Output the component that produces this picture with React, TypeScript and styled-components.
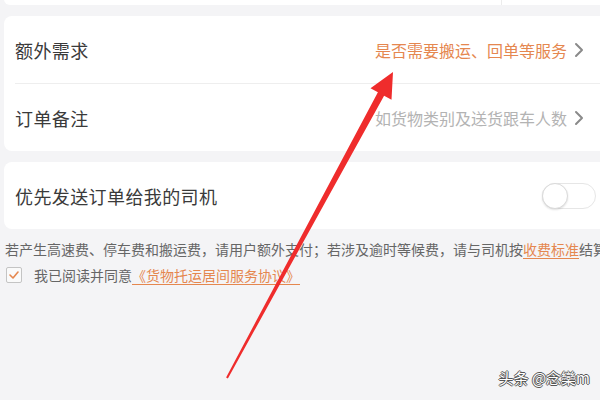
import styled, { createGlobalStyle } from 'styled-components';

const GlobalStyle = createGlobalStyle`
  html, body {
    margin: 0;
    padding: 0;
    background: #f4f4f6;
    font-family: "Noto Sans CJK SC", "Noto Sans", sans-serif;
    overflow: hidden;
  }
`;

const Page = styled.div`
  position: relative;
  width: 600px;
  height: 400px;
  overflow: hidden;
  background: #f4f4f6;
`;

const Content = styled.div`
  display: flex;
  flex-direction: column;
  gap: 11px;
  padding-left: 4px;
  margin-top: -7px;
`;

const Card = styled.div`
  background: #ffffff;
  border-radius: 8px;
  margin-right: -12px;
  padding-left: 11px;
`;

const TopStub = styled(Card)`
  height: 12px;
  display: flex;
  justify-content: flex-end;
  padding-right: 110px;
`;

const StubLine = styled.div`
  width: 1px;
  background: #ececec;
`;

const Row = styled.div<{ $divider?: boolean }>`
  height: 67px;
  display: flex;
  align-items: center;
  justify-content: space-between;
  padding-right: 28px;
  border-bottom: ${(p) => (p.$divider ? '1px solid #eeeeee' : 'none')};
`;

const Label = styled.span`
  font-size: 18px;
  color: #3a3a3a;
  letter-spacing: 0.4px;
`;

const Value = styled.span<{ $accent?: boolean }>`
  display: flex;
  align-items: center;
  gap: 7px;
  font-size: 16px;
  color: ${(p) => (p.$accent ? '#e5874f' : '#b3b3b3')};
`;

const Chevron = () => (
  <svg width="10" height="16" viewBox="0 0 10 16">
    <path d="M2 2 L8 8 L2 14" fill="none" stroke="#8a8a8a" strokeWidth="2" strokeLinecap="round" strokeLinejoin="round" />
  </svg>
);

const Toggle = styled.div`
  width: 54px;
  height: 26px;
  border-radius: 13px;
  border: 1px solid #e6e6e6;
  background: #ffffff;
  display: flex;
  align-items: center;
  box-sizing: border-box;
  margin-right: -12px;
`;

const Knob = styled.div`
  width: 26px;
  height: 26px;
  border-radius: 50%;
  border: 1.5px solid #dadada;
  box-sizing: border-box;
  margin-left: -1px;
  background: #ffffff;
  box-shadow: 0 1px 2px rgba(0, 0, 0, 0.12);
`;

const Notice = styled.div`
  padding: 0 0 0 5px;
  margin-left: -4px;
  margin-top: -1px;
  font-size: 14px;
  color: #666666;
  white-space: nowrap;
  overflow: hidden;
`;

const Link = styled.span`
  color: #e5874f;
  text-decoration: underline;
  text-underline-offset: 3px;
`;

const AgreeRow = styled.div`
  display: flex;
  align-items: center;
  gap: 12px;
  padding-left: 2px;
  margin-top: -5px;
  font-size: 14px;
  color: #666666;
`;

const Check = styled.div`
  width: 16px;
  height: 16px;
  border: 1.5px solid #c4c4c4;
  border-radius: 2px;
  display: flex;
  align-items: center;
  justify-content: center;
  background: #fafafa;
  box-sizing: border-box;
`;

const Watermark = styled.div`
  position: absolute;
  right: 10px;
  bottom: 12px;
  font-size: 15px;
  color: #ffffff;
  text-shadow: -1px 0 #555, 1px 0 #555, 0 -1px #555, 0 1px #555;
`;

const Overlay = styled.svg`
  position: absolute;
  left: 0;
  top: 0;
  pointer-events: none;
`;

export default function App() {
  return (
    <Page>
      <GlobalStyle />
      <Content>
        <TopStub>
          <StubLine />
        </TopStub>
        <Card>
          <Row $divider>
            <Label>额外需求</Label>
            <Value $accent>
              是否需要搬运、回单等服务
              <Chevron />
            </Value>
          </Row>
          <Row>
            <Label>订单备注</Label>
            <Value>
              如货物类别及送货跟车人数
              <Chevron />
            </Value>
          </Row>
        </Card>
        <Card>
          <Row>
            <Label>优先发送订单给我的司机</Label>
            <Toggle>
              <Knob />
            </Toggle>
          </Row>
        </Card>
        <Notice>
          若产生高速费、停车费和搬运费，请用户额外支付；若涉及逾时等候费，请与司机按<Link>收费标准</Link>结算
        </Notice>
        <AgreeRow>
          <Check>
            <svg width="10" height="8" viewBox="0 0 10 8">
              <path d="M1 4 L4 7 L9 1" fill="none" stroke="#e5874f" strokeWidth="1.6" strokeLinecap="round" strokeLinejoin="round" />
            </svg>
          </Check>
          <span>
            我已阅读并同意<Link>《货物托运居间服务协议》</Link>
          </span>
        </AgreeRow>
      </Content>
      <Overlay width="600" height="400" viewBox="0 0 600 400">
        <polygon
          points="226.1,377.5 377.9,92.3 370.5,88.3 393,72 391.5,99.7 384.1,95.7 227.9,378.5"
          fill="#ef2c2c"
        />
      </Overlay>
      <Watermark>头条 @念欒m</Watermark>
    </Page>
  );
}
